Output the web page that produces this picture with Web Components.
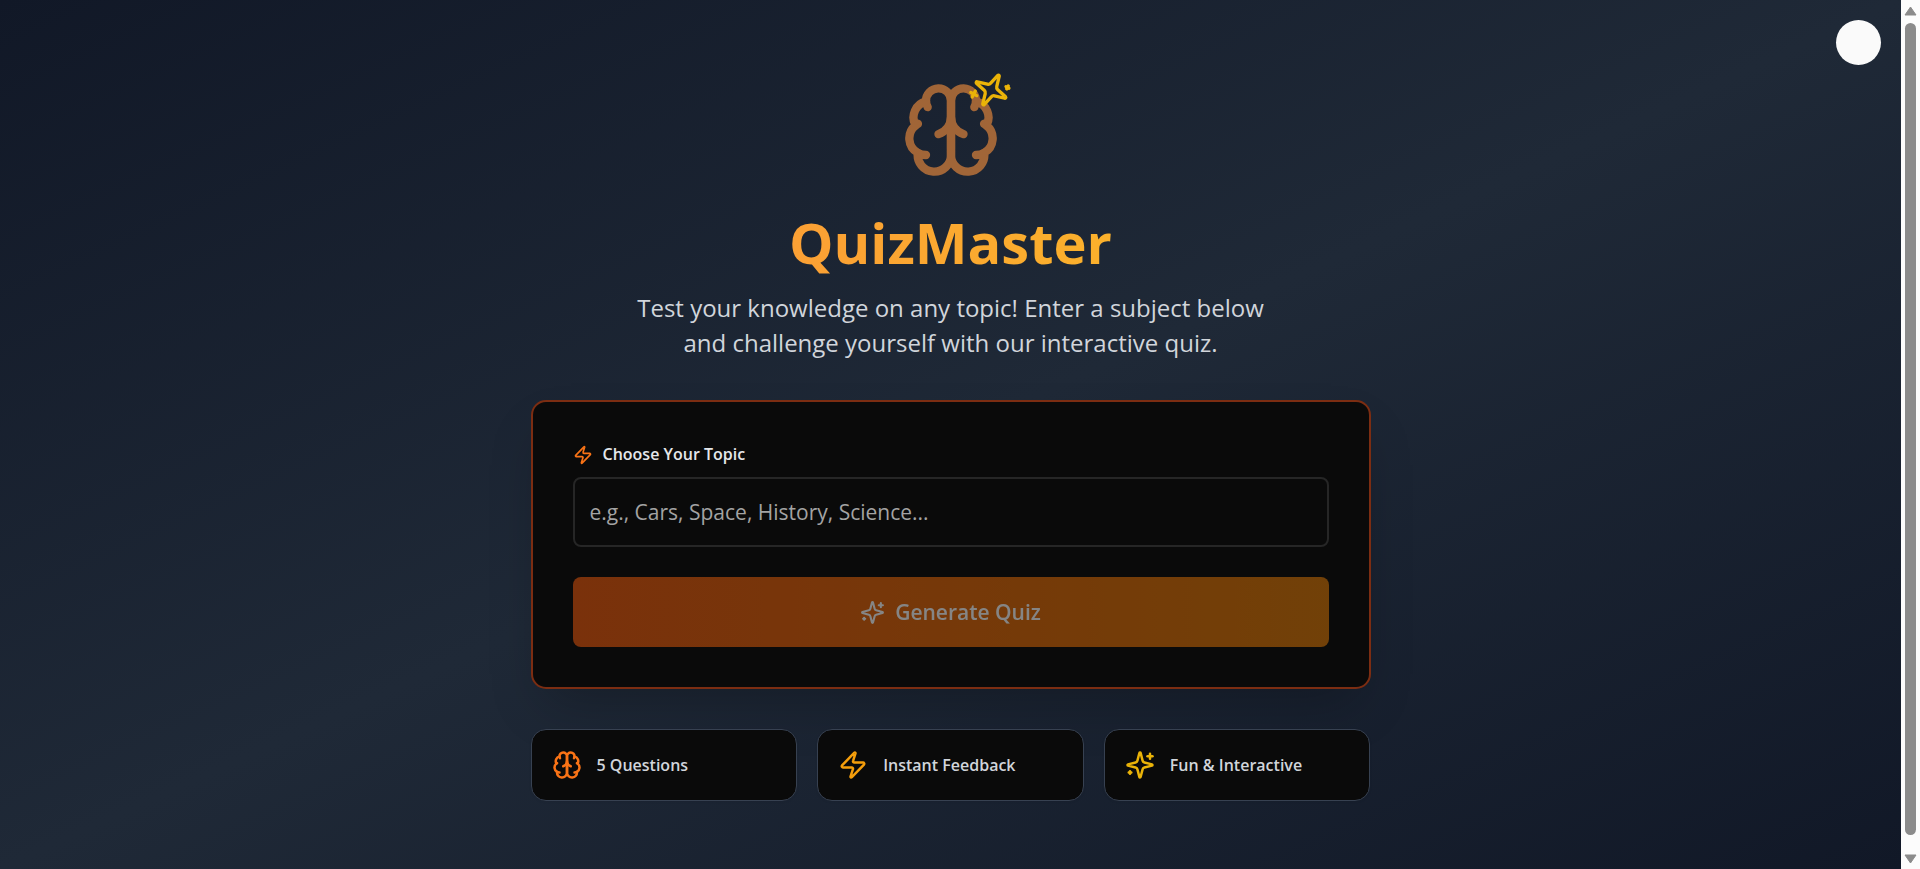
<!DOCTYPE html>
<html lang="en">
<head>
<meta charset="utf-8">
<title>QuizMaster</title>
<style>
  html, body { margin: 0; height: 100%; background: #0a0a0a; }
  body { font-family: "Open Sans", "Noto Sans", sans-serif; color: #d1d5db; }
</style>
</head>
<body>
<quiz-app></quiz-app>
<script>
  const ICONS = {
    brain: '<path d="M12 5a3 3 0 1 0-5.997.125 4 4 0 0 0-2.526 5.77 4 4 0 0 0 .556 6.588A4 4 0 1 0 12 18Z"/><path d="M12 5a3 3 0 1 1 5.997.125 4 4 0 0 1 2.526 5.77 4 4 0 0 1-.556 6.588A4 4 0 1 1 12 18Z"/><path d="M15 13a4.5 4.5 0 0 1-3-4 4.5 4.5 0 0 1-3 4"/><path d="M17.599 6.5a3 3 0 0 0 .399-1.375"/><path d="M6.003 5.125A3 3 0 0 0 6.401 6.5"/><path d="M3.477 10.896a4 4 0 0 1 .585-.396"/><path d="M19.938 10.5a4 4 0 0 1 .585.396"/><path d="M6 18a4 4 0 0 1-1.967-.516"/><path d="M19.967 17.484A4 4 0 0 1 18 18"/>',
    zap: '<path d="M4 14a1 1 0 0 1-.78-1.63l9.9-10.2a.5.5 0 0 1 .86.46l-1.92 6.02A1 1 0 0 0 13 10h7a1 1 0 0 1 .78 1.63l-9.9 10.2a.5.5 0 0 1-.86-.46l1.92-6.02A1 1 0 0 0 11 14z"/>',
    sparkles: '<path d="M9.937 15.5A2 2 0 0 0 8.5 14.063l-6.135-1.582a.5.5 0 0 1 0-.962L8.5 9.936A2 2 0 0 0 9.937 8.5l1.582-6.135a.5.5 0 0 1 .963 0L14.063 8.5A2 2 0 0 0 15.5 9.937l6.135 1.581a.5.5 0 0 1 0 .964L15.5 14.063a2 2 0 0 0-1.437 1.437l-1.582 6.135a.5.5 0 0 1-.963 0z"/><path d="M20 3v4"/><path d="M22 5h-4"/><path d="M4 17v2"/><path d="M5 18H3"/>'
  };

  class QuizIcon extends HTMLElement {
    constructor() {
      super();
      this.attachShadow({ mode: 'open' }).innerHTML = `
        <style>
          :host { display: block; flex: none; width: 24px; height: 24px; }
          svg { display: block; width: 100%; height: 100%; }
        </style>
        <svg viewBox="0 0 24 24" fill="none" stroke="currentColor" stroke-width="2" stroke-linecap="round" stroke-linejoin="round" aria-hidden="true"></svg>`;
    }
    connectedCallback() {
      this.shadowRoot.querySelector('svg').innerHTML = ICONS[this.getAttribute('name')] || '';
    }
  }
  customElements.define('quiz-icon', QuizIcon);

  class QuizHero extends HTMLElement {
    constructor() {
      super();
      this.attachShadow({ mode: 'open' }).innerHTML = `
        <style>
          :host { display: flex; flex-direction: column; align-items: center; text-align: center; }
          .logo { position: relative; width: 100px; height: 100px; margin-bottom: 25px; }
          .brain { width: 100px; height: 100px; color: #fb923c; opacity: .6; }
          .spark { position: absolute; top: -10px; right: -10px; width: 40px; height: 40px; color: #eab308; transform: rotate(208deg); }
          h1 { margin: 0 0 10px; font-size: 56px; line-height: 75px; font-weight: 700;
               background: linear-gradient(to right, #fb923c, #fbbf24); background-clip: text; -webkit-background-clip: text; color: transparent; width: 100%; }
          p { margin: 0; max-width: 660px; font-size: 24px; line-height: 35px; }
        </style>
        <div class="logo">
          <quiz-icon class="brain" name="brain"></quiz-icon>
          <quiz-icon class="spark" name="sparkles"></quiz-icon>
        </div>
        <h1><slot name="title"></slot></h1>
        <p><slot></slot></p>`;
    }
  }
  customElements.define('quiz-hero', QuizHero);

  class QuizForm extends HTMLElement {
    constructor() {
      super();
      this.attachShadow({ mode: 'open' }).innerHTML = `
        <style>
          :host { display: block; box-sizing: border-box; padding: 40px; border: 2px solid #7c2d12; border-radius: 15px; background: #0a0a0a;
                  box-shadow: 0 25px 50px -15px rgb(0 0 0 / .25); }
          form { display: flex; flex-direction: column; }
          label { display: flex; align-items: center; gap: 10px; margin-bottom: 10px; font-size: 16px; line-height: 25px; font-weight: 600; color: #e5e7eb; }
          label quiz-icon { width: 20px; height: 20px; color: #f97316; }
          input { box-sizing: border-box; width: 100%; height: 70px; margin: 0 0 30px; padding: 0 15px; border: 2px solid #262626; border-radius: 8px;
                  background: transparent; color: #fafafa; font: inherit; font-size: 21px; outline: none; }
          input::placeholder { color: #a3a3a3; opacity: 1; }
          button { display: flex; align-items: center; justify-content: center; gap: 10px; width: 100%; height: 70px; padding: 0; border: 0; border-radius: 8px;
                   background: linear-gradient(to right, #ea580c, #d97706); color: #fff; font: inherit; font-size: 21px; font-weight: 600; opacity: .5; }
          button quiz-icon { width: 25px; height: 25px; }
        </style>
        <form>
          <label for="topic"><quiz-icon name="zap"></quiz-icon>Choose Your Topic</label>
          <input id="topic" type="text" placeholder="e.g., Cars, Space, History, Science...">
          <button type="submit" disabled><quiz-icon name="sparkles"></quiz-icon>Generate Quiz</button>
        </form>`;
    }
  }
  customElements.define('quiz-form', QuizForm);

  class QuizFeature extends HTMLElement {
    constructor() {
      super();
      this.attachShadow({ mode: 'open' }).innerHTML = `
        <style>
          :host { display: flex; align-items: center; gap: 15px; box-sizing: border-box; height: 72px; padding: 0 20px; border: 1px solid #374151; border-radius: 15px; background: #0a0a0a;
                  font-size: 16px; line-height: 25px; font-weight: 600; white-space: nowrap; box-shadow: 0 1px 3px rgb(0 0 0 / .05); }
          quiz-icon { width: 30px; height: 30px; color: var(--accent); }
        </style>
        <quiz-icon></quiz-icon><span><slot></slot></span>`;
    }
    connectedCallback() {
      const icon = this.shadowRoot.querySelector('quiz-icon');
      icon.setAttribute('name', this.getAttribute('icon'));
      icon.connectedCallback();
    }
  }
  customElements.define('quiz-feature', QuizFeature);

  class ScrollRail extends HTMLElement {
    constructor() {
      super();
      this.attachShadow({ mode: 'open' }).innerHTML = `
        <style>
          :host { display: flex; flex-direction: column; align-items: center; justify-content: space-between; flex: none; box-sizing: border-box; width: 19px; padding: 6px 0 5px; background: #fcfcfc; }
          svg { display: block; width: 13px; height: 10px; fill: #8b8b8b; stroke: #8b8b8b; stroke-linejoin: round; }
          .thumb { flex: 1; width: 11px; margin: 7px 0 19px; border-radius: 6px; background: #8b8b8b; }
        </style>
        <svg viewBox="0 0 13 10"><path d="M6.500 1L12 9H1Z"/></svg>
        <div class="thumb"></div>
        <svg viewBox="0 0 13 10"><path d="M1 1H12L6.500 9Z"/></svg>`;
    }
  }
  customElements.define('scroll-rail', ScrollRail);

  class QuizApp extends HTMLElement {
    constructor() {
      super();
      this.attachShadow({ mode: 'open' }).innerHTML = `
        <style>
          :host { display: flex; min-height: 100vh; }
          main { position: relative; flex: 1; min-width: 0; box-sizing: border-box; display: flex; flex-direction: column; align-items: center; padding: 80px 20px 60px;
                 background: linear-gradient(to bottom right, #111827, #1f2937, #111827); }
          .column { width: 100%; max-width: 840px; display: flex; flex-direction: column; gap: 40px; }
          .features { display: grid; grid-template-columns: repeat(auto-fit, minmax(240px, 1fr)); gap: 20px; }
          .theme { position: absolute; top: 20px; right: 20px; width: 45px; height: 45px; padding: 0; border: 0; border-radius: 50%; background: #fafafa; }
        </style>
        <main>
          <button class="theme" type="button" aria-label="Toggle theme"></button>
          <div class="column">
            <quiz-hero><span slot="title">QuizMaster</span>Test your knowledge on any topic! Enter a subject below and challenge yourself with our interactive quiz.</quiz-hero>
            <quiz-form></quiz-form>
            <div class="features">
              <quiz-feature icon="brain" style="--accent:#f97316">5 Questions</quiz-feature>
              <quiz-feature icon="zap" style="--accent:#f59e0b">Instant Feedback</quiz-feature>
              <quiz-feature icon="sparkles" style="--accent:#eab308">Fun &amp; Interactive</quiz-feature>
            </div>
          </div>
        </main>
        <scroll-rail></scroll-rail>`;
    }
  }
  customElements.define('quiz-app', QuizApp);
</script>
</body>
</html>
